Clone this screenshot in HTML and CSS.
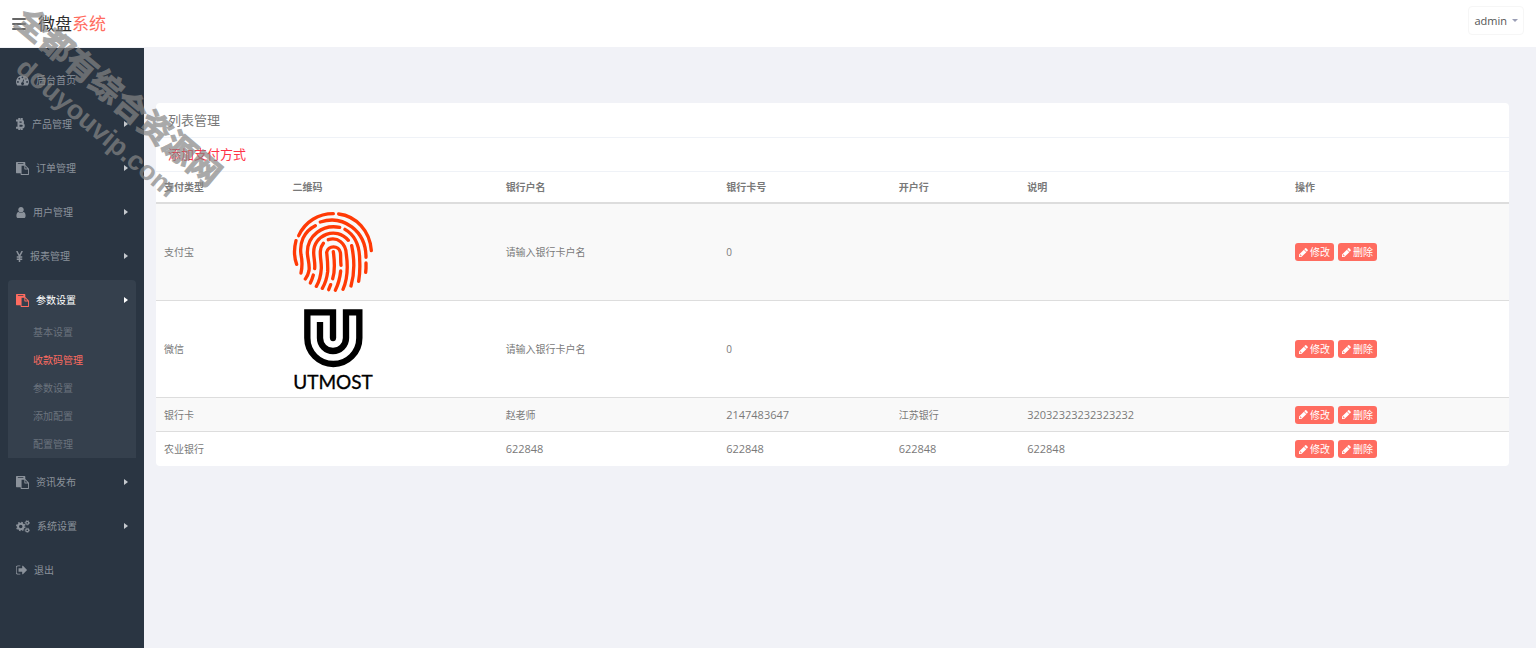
FILE: index.html
```html
<!DOCTYPE html>
<html lang="zh-CN">
<head>
<meta charset="utf-8">
<title>微盘系统</title>
<link rel="stylesheet" href="styles.css">
</head>
<body>
<svg class="sprite" aria-hidden="true">
  <symbol id="paste" viewBox="0 0 1792 1792"><path d="M768 1664h896v-640h-416q-40 0-68-28t-28-68v-416h-384v1152zm256-1440v-64q0-13-9.500-22.500t-22.500-9.500h-704q-13 0-22.500 9.500t-9.500 22.500v64q0 13 9.500 22.500t22.500 9.500h704q13 0 22.500-9.500t9.500-22.500zm256 672h299l-299-299v299zm512 128v672q0 40-28 68t-68 28h-960q-40 0-68-28t-28-68v-160h-544q-40 0-68-28t-28-68v-1344q0-40 28-68t68-28h1088q40 0 68 28t28 68v328q21 13 36 28l408 408q28 28 48 76t20 88z"/></symbol>
  <symbol id="user" viewBox="256 128 1280 1536"><path d="M1536 1399q0 109-62.500 187t-150.500 78h-854q-88 0-150.500-78t-62.500-187q0-85 8.500-160.500t31.500-152 58.500-131 94-89 134.500-34.500q131 128 313 128t313-128q76 0 134.500 34.500t94 89 58.500 131 31.500 152 8.500 160.500zm-256-887q0 159-112.500 271.500t-271.500 112.500-271.500-112.500-112.500-271.500 112.500-271.500 271.500-112.500 271.500 112.500 112.500 271.500z"/></symbol>
  <symbol id="exit" viewBox="96 256 1536 1280"><path d="M704 1440q0 4 1 20t.5 26.500-3 23.500-10 19.500-20.500 6.500h-320q-119 0-203.500-84.500t-84.500-203.500v-704q0-119 84.500-203.500t203.500-84.500h320q13 0 22.500 9.500t9.500 22.500q0 4 1 20t.5 26.500-3 23.500-10 19.500-20.500 6.500h-320q-66 0-113 47t-47 113v704q0 66 47 113t113 47h312l11.500 1 11.500 3 8 5.500 7 9 2 13.500zm928-544q0 26-19 45l-544 544q-19 19-45 19t-45-19-19-45v-288h-448q-26 0-45-19t-19-45v-384q0-26 19-45t45-19h448v-288q0-26 19-45t45-19 45 19l544 544q19 19 19 45z"/></symbol>
  <symbol id="pencil" viewBox="128 128 1536 1536"><path d="M491 1536l91-91-235-235-91 91v107h128v128h107zm469-1120l416 416-832 832h-416v-416zm683 96q0 53-37 90l-166 166-416-416 166-165q36-38 90-38 53 0 91 38l235 234q37 39 37 91z"/></symbol>
  <symbol id="gauge" viewBox="0 0 28 24"><path fill-rule="evenodd" d="M14 1a14 14 0 0 1 11.800 21.500q-.4.500-1 .5H3.200q-.6 0-1-.5A14 14 0 0 1 14 1zM4 13a2 2 0 1 0 0 4 2 2 0 0 0 0-4zm3-7a2 2 0 1 0 0 4 2 2 0 0 0 0-4zm7-3a2 2 0 1 0 0 4 2 2 0 0 0 0-4zm7 3a2 2 0 1 0 0 4 2 2 0 0 0 0-4zm3 7a2 2 0 1 0 0 4 2 2 0 0 0 0-4zm-8.600-3-1.600 6a3 3 0 1 0 2 .5l1.600-6z"/></symbol>
  <symbol id="coin" viewBox="0 0 18 24"><path fill="none" stroke="currentColor" stroke-width="4" d="M0 5h10q4 0 4 3.200t-4 3.300H5h6q4.500 0 4.500 4t-4.500 4H0M5 4v16M6.500 0v4m5-4v4m-5 16v4m5-4v4"/></symbol>
  <symbol id="yen" viewBox="0 0 14 22"><path fill="none" stroke="currentColor" stroke-width="3" d="M1.500 0 7 10.500 12.500 0M7 10v12M1.500 12h11m-11 4.500h11"/></symbol>
  <symbol id="cogs" viewBox="0 0 28 26"><g fill="none" stroke="currentColor"><circle cx="9.500" cy="13" r="5.500" stroke-width="4"/><circle cx="9.500" cy="13" r="8.200" stroke-width="2.600" stroke-dasharray="3.220"/><circle cx="22.500" cy="5.500" r="2.900" stroke-width="2.400"/><circle cx="22.500" cy="5.500" r="4.500" stroke-width="1.500" stroke-dasharray="2.020"/><circle cx="22.500" cy="20.500" r="2.900" stroke-width="2.400"/><circle cx="22.500" cy="20.500" r="4.500" stroke-width="1.500" stroke-dasharray="2.020"/></g></symbol>
</svg>

<header class="header">
  <button class="toggle" type="button" aria-label="菜单"><span></span><span></span><span></span></button>
  <a class="logo" href="#">微盘<span>系统</span></a>
  <button class="account" type="button">admin<i class="caret"></i></button>
</header>

<div class="layout">
  <nav class="sidebar">
    <ul class="menu">
      <li><a class="item" href="#"><svg class="icon" width="13" height="11"><use href="#gauge"/></svg>后台首页</a></li>
      <li><a class="item" href="#"><svg class="icon" width="9" height="12"><use href="#coin"/></svg>产品管理<i class="arrow"></i></a></li>
      <li><a class="item" href="#"><svg class="icon" width="13" height="13"><use href="#paste"/></svg>订单管理<i class="arrow"></i></a></li>
      <li><a class="item" href="#"><svg class="icon" width="10" height="11"><use href="#user"/></svg>用户管理<i class="arrow"></i></a></li>
      <li><a class="item" href="#"><svg class="icon" width="7" height="11"><use href="#yen"/></svg>报表管理<i class="arrow"></i></a></li>
      <li class="open">
        <a class="item" href="#"><svg class="icon" width="13" height="13"><use href="#paste"/></svg>参数设置<i class="arrow"></i></a>
        <ul class="submenu">
          <li><a href="#">基本设置</a></li>
          <li><a class="current" href="#">收款码管理</a></li>
          <li><a href="#">参数设置</a></li>
          <li><a href="#">添加配置</a></li>
          <li><a href="#">配置管理</a></li>
        </ul>
      </li>
      <li><a class="item" href="#"><svg class="icon" width="13" height="13"><use href="#paste"/></svg>资讯发布<i class="arrow"></i></a></li>
      <li><a class="item" href="#"><svg class="icon" width="14" height="13"><use href="#cogs"/></svg>系统设置<i class="arrow"></i></a></li>
      <li><a class="item" href="#"><svg class="icon" width="11" height="10"><use href="#exit"/></svg>退出</a></li>
    </ul>
  </nav>

  <main class="main">
    <section class="panel">
      <h1 class="heading">列表管理</h1>
      <div class="heading"><a class="add" href="#">添加支付方式</a></div>
      <table class="table">
        <colgroup><col class="c-type"><col class="c-code"><col class="c-name"><col class="c-card"><col class="c-bank"><col class="c-note"><col></colgroup>
        <thead>
          <tr><th>支付类型</th><th>二维码</th><th>银行户名</th><th>银行卡号</th><th>开户行</th><th>说明</th><th>操作</th></tr>
        </thead>
        <tbody>
          <tr>
            <td>支付宝</td>
            <td>
              <svg class="code" viewBox="21 21 240 240" role="img" aria-label="支付宝">
                <g fill="none" stroke="#ff3a06" stroke-width="10" stroke-linecap="round">
                  <path d="M38 92C58 49 98 26 142 26"/><path d="M158 27C210 33 252 78 256 137"/>
                  <path d="M30 107Q20 145 32 178"/>
                  <path d="M103 51C172 28 240 78 240 157"/><path d="M240 174 240 190 239 202"/>
                  <path d="M88 62C52 80 40 115 45 149Q51 176 45 204"/>
                  <path d="M161 67C110 57 64 92 64 142C64 160 72 177 69 197Q66 212 58 222"/>
                  <path d="M177 73C215 95 221 132 221 165Q223 199 218 229"/>
                  <path d="M187 106C150 62 83 90 83 142C83 160 88 172 86 191"/>
                  <path d="M82 210Q78 224 73 234"/>
                  <path d="M127 104C155 95 180 115 181 148C186 185 185 222 171 253"/>
                  <path d="M197 122C206 165 206 205 195 243"/>
                  <path d="M112 115C95 135 107 165 106 190Q104 222 91 244"/>
                  <path d="M165 181C163 165 165 154 163 142A21 21 0 0 0 122 142C124 160 126 180 125 200Q122 228 109 250"/>
                  <path d="M142 140C146 170 147 200 140 221"/>
                  <path d="M134 239 128 254"/><path d="M164 198Q161 229 148 256"/>
                </g>
              </svg>
            </td>
            <td>请输入银行卡户名</td><td>0</td><td></td><td></td>
            <td><span class="actions"><a class="btn" href="#"><svg width="9" height="9"><use href="#pencil"/></svg>修改</a><a class="btn" href="#"><svg width="9" height="9"><use href="#pencil"/></svg>删除</a></span></td>
          </tr>
          <tr>
            <td>微信</td>
            <td>
              <svg class="code" viewBox="36 416 240 240" role="img" aria-label="UTMOST">
                <path fill="none" stroke="#000" stroke-width="19" d="M156 504V426H79V503A78 78 0 0 0 235 503V426H195V503A39 39 0 0 1 117 503V455"/>
                <circle cx="156" cy="504" r="9" fill="#000"/>
                <text class="brand" x="156" y="655" text-anchor="middle">UTMOST</text>
              </svg>
            </td>
            <td>请输入银行卡户名</td><td>0</td><td></td><td></td>
            <td><span class="actions"><a class="btn" href="#"><svg width="9" height="9"><use href="#pencil"/></svg>修改</a><a class="btn" href="#"><svg width="9" height="9"><use href="#pencil"/></svg>删除</a></span></td>
          </tr>
          <tr>
            <td>银行卡</td><td></td><td>赵老师</td><td class="num">2147483647</td><td>江苏银行</td><td class="num">32032323232323232</td>
            <td><span class="actions"><a class="btn" href="#"><svg width="9" height="9"><use href="#pencil"/></svg>修改</a><a class="btn" href="#"><svg width="9" height="9"><use href="#pencil"/></svg>删除</a></span></td>
          </tr>
          <tr>
            <td>农业银行</td><td></td><td class="num">622848</td><td class="num">622848</td><td class="num">622848</td><td class="num">622848</td>
            <td><span class="actions"><a class="btn" href="#"><svg width="9" height="9"><use href="#pencil"/></svg>修改</a><a class="btn" href="#"><svg width="9" height="9"><use href="#pencil"/></svg>删除</a></span></td>
          </tr>
        </tbody>
      </table>
    </section>
  </main>
</div>

<div class="watermark" aria-hidden="true"><div>全都有综合资源网</div><div class="site">douyouvip.com</div></div>
</body>
</html>
```
FILE: styles.css
```css
* { box-sizing: border-box; }

body {
  margin: 0;
  min-height: 100vh;
  display: flex;
  flex-direction: column;
  background: #f1f2f7;
  color: #797979;
  font: 10px/16px "Open Sans", "Noto Sans CJK SC", sans-serif;
}

a { color: inherit; text-decoration: none; }
ul { margin: 0; padding: 0; list-style: none; }
button { font: inherit; cursor: pointer; }
svg { fill: currentColor; flex: none; }
.sprite { position: absolute; width: 0; height: 0; }

.header {
  display: flex;
  align-items: center;
  height: 48px;
  padding: 0 12px;
  background: #fff;
  border-bottom: 1px solid #f1f2f7;
}

.toggle {
  display: flex;
  flex-direction: column;
  gap: 3px;
  width: 14px;
  padding: 0;
  border: 0;
  background: none;
}
.toggle span { height: 2px; border-radius: 1px; background: #666; }

.logo { margin-left: 12px; font-size: 17px; line-height: 24px; color: #2e2e2e; }
.logo span { color: #ff6c60; }

.account {
  display: flex;
  align-items: center;
  gap: 5px;
  height: 29px;
  margin: 0 0 6px auto;
  padding: 0 5px;
  border: 1px solid #f6f6f6;
  border-radius: 4px;
  background: #fff;
  color: #555;
  font-size: 11px;
}
.caret { border: 3px solid transparent; border-top-color: #9a9eb5; border-bottom: 0; }

.layout { flex: 1; display: flex; }

.sidebar { width: 144px; flex: none; padding: 12px 8px; background: #2a3542; color: #8b929b; }
.menu { display: flex; flex-direction: column; gap: 4px; }
.item { display: flex; align-items: center; height: 40px; padding: 0 8px; }
.icon { margin-right: 7px; }
.arrow { margin-left: auto; border: 3px solid transparent; border-left: 4px solid #c5c9ce; border-right: 0; }
.open { border-radius: 4px 4px 0 0; background: #35404d; }
.open .item { color: #fff; }
.open .icon { color: #ff6c60; }
.open .arrow { border-left-color: #fff; }

.submenu { display: flex; flex-direction: column; gap: 4px; padding: 0 0 2px 25px; color: #6b737d; }
.submenu a { display: block; line-height: 24px; }
.submenu .current { color: #ff6c60; }

.main { flex: 1; min-width: 0; padding: 55px 27px 12px 12px; }
.panel { padding-top: 1px; background: #fff; border-radius: 4px; overflow: hidden; }
.heading {
  margin: 0;
  padding: 6px 12px;
  border-bottom: 1px solid #eff2f7;
  font-size: 13px;
  font-weight: 400;
  line-height: 21px;
}
.add { color: #ff3347; }

.table { width: 100%; table-layout: fixed; border-collapse: separate; border-spacing: 0; text-align: left; }
.table th, .table td { padding: 7px 8px; border-bottom: 1px solid #ddd; }
.table td { height: 34px; }
.table th { height: 32px; font-weight: 700; }
.table tr:last-child td { border-bottom: 0; }
.table thead tr:last-child th { border-bottom: 2px solid #ddd; }
.table tbody tr:nth-child(odd) { background: #f9f9f9; }
.table .num { font-size: 11px; }
.c-type { width: 9.5%; }
.c-code { width: 15.75%; }
.c-name { width: 16.3%; }
.c-card { width: 12.75%; }
.c-bank { width: 9.5%; }
.c-note { width: 19.8%; }

.code { display: block; width: 80px; height: 80px; margin: 1px 0; overflow: visible; }
.brand { fill: #000; stroke: #000; stroke-width: 1px; font-family: Lato, sans-serif; font-size: 57px; }

.actions { display: flex; gap: 4px; }
.btn {
  display: flex;
  align-items: center;
  gap: 2px;
  height: 18px;
  padding: 0 4px;
  border-radius: 3px;
  background: #ff6c60;
  color: #fff;
}

.watermark {
  position: absolute;
  top: 75px;
  left: -44px;
  width: 300px;
  transform: rotate(40deg);
  color: #858585;
  opacity: 0.7;
  font: 700 32px/37px "Liberation Sans", "Noto Sans CJK SC", sans-serif;
  -webkit-text-stroke: 1px #858585;
  text-align: center;
  white-space: nowrap;
  pointer-events: none;
}
.site { padding-left: 6px; font-size: 27px; -webkit-text-stroke: 0; }
```
